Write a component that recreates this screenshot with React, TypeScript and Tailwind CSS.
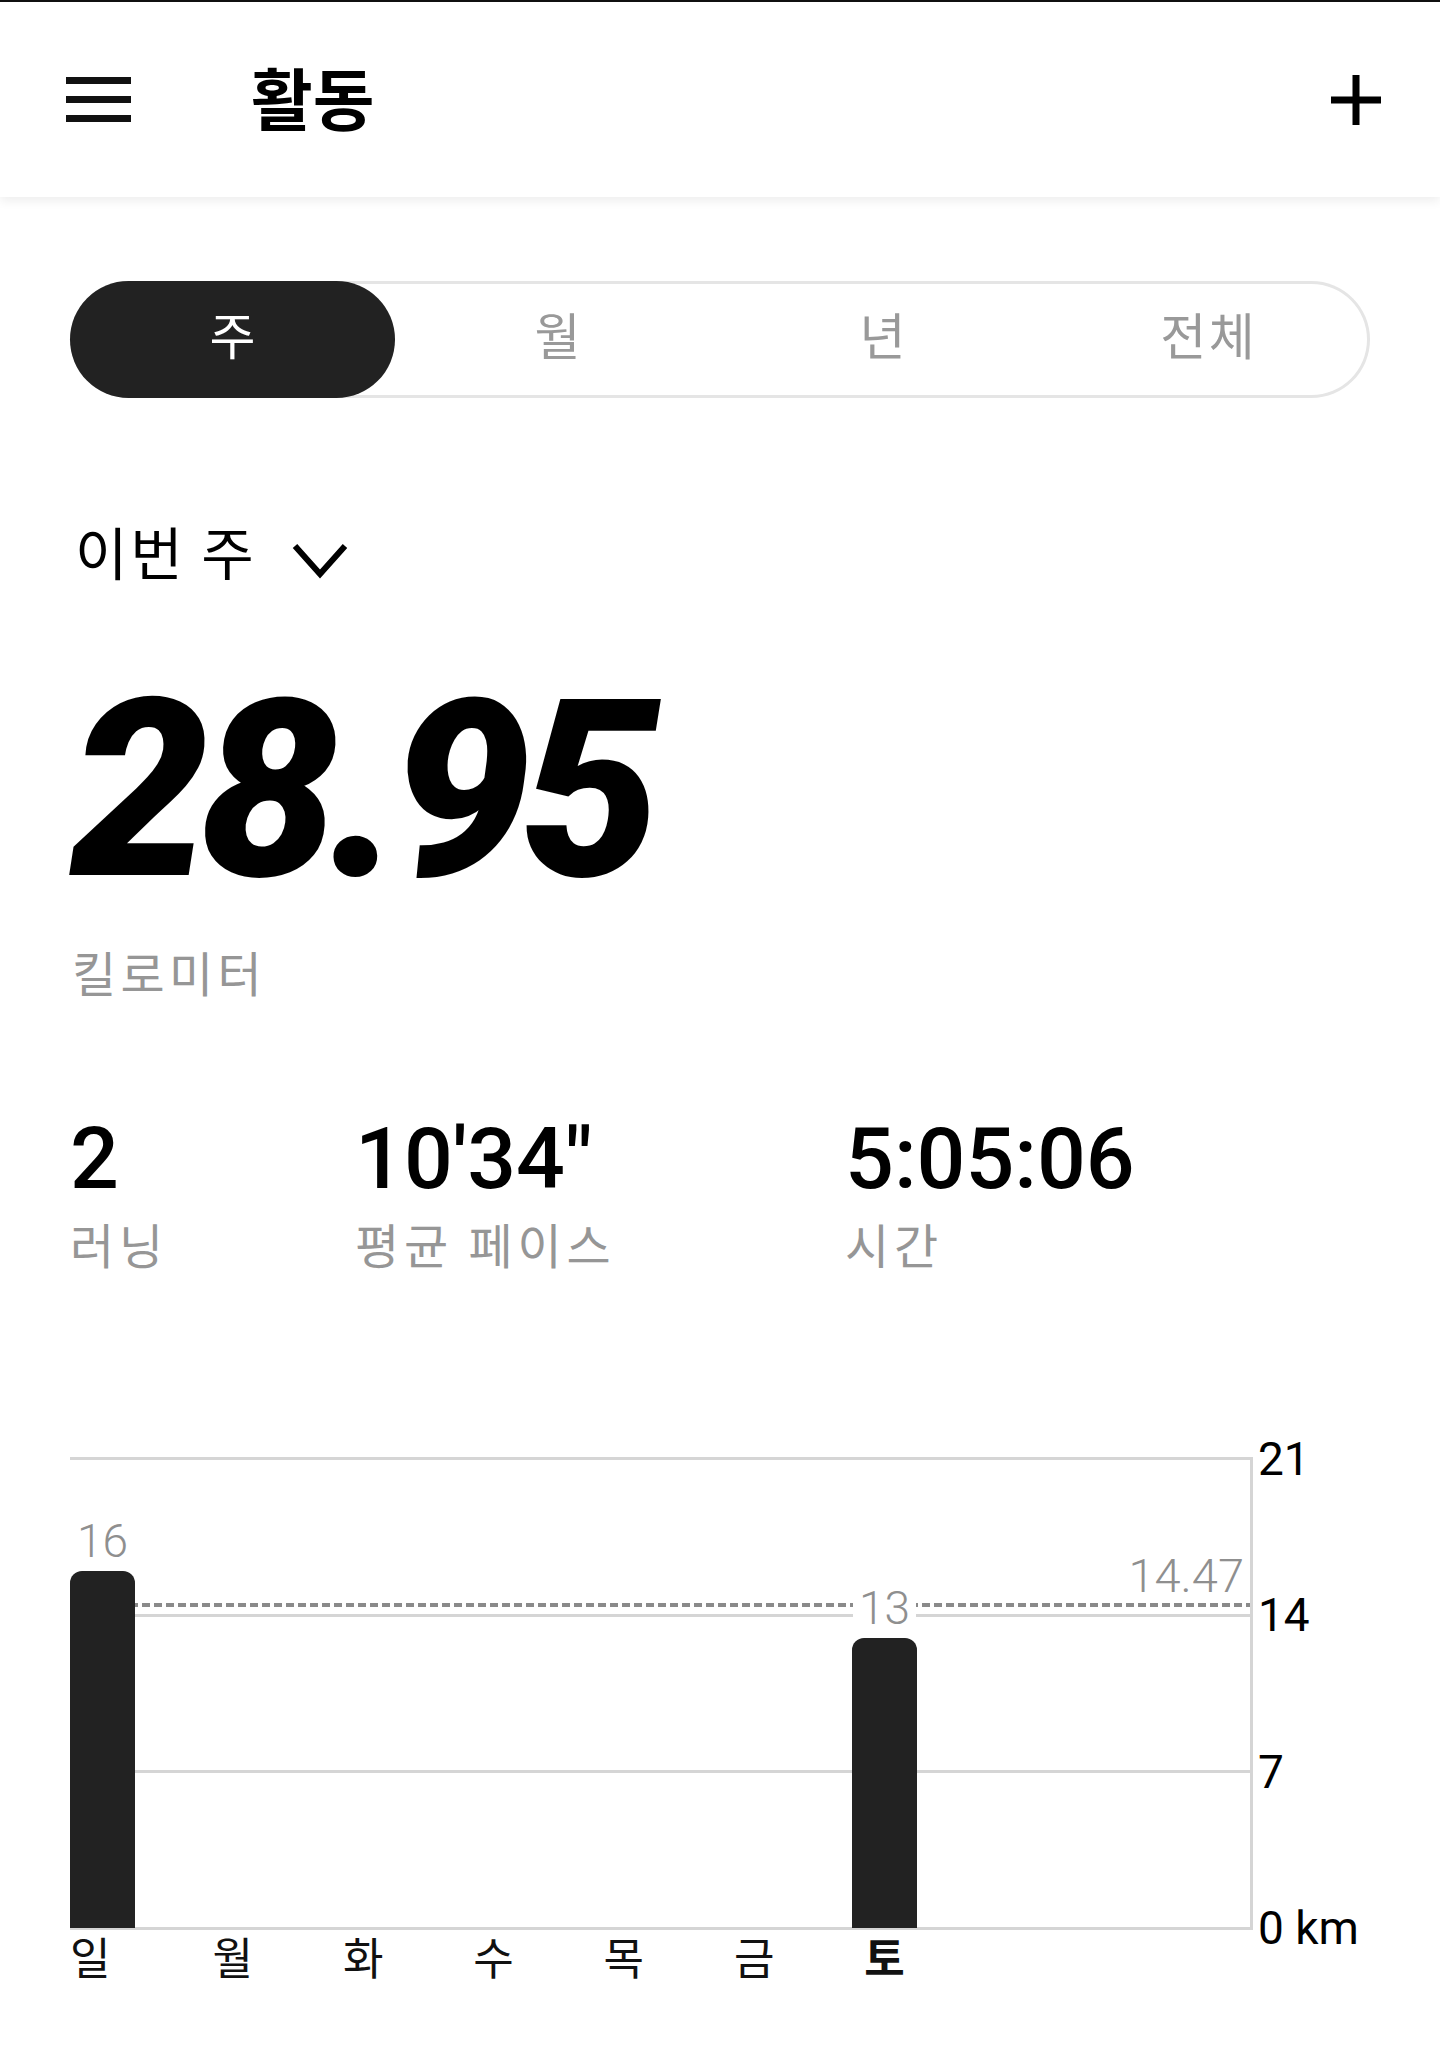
import React from 'react';

const KR = "font-['Noto_Sans_CJK_KR','Noto_Sans',sans-serif]";
const NUM = "font-['Roboto','Noto_Sans_CJK_KR',sans-serif]";

const MAX_KM = 21;
const PLOT_H = 470;

const days = [
  { day: '일', km: 16 },
  { day: '월', km: 0 },
  { day: '화', km: 0 },
  { day: '수', km: 0 },
  { day: '목', km: 0 },
  { day: '금', km: 0 },
  { day: '토', km: 13, today: true },
];

const tabs = ['주', '월', '년', '전체'];

function Header() {
  return (
    <header className="relative z-10 flex h-[195px] items-center bg-white shadow-[0_4px_10px_rgba(0,0,0,0.07)]">
      <div className="ml-[66px] flex w-[65px] flex-col gap-[12px]">
        <span className="h-[7px] bg-[#111]" />
        <span className="h-[7px] bg-[#111]" />
        <span className="h-[7px] bg-[#111]" />
      </div>
      <h1 className={`${KR} mb-[8px] ml-[120px] text-[67px] font-bold leading-none text-black`}>활동</h1>
      <svg className="ml-auto mr-[59px] h-[50px] w-[50px]" viewBox="0 0 50 50">
        <path d="M25 0V50M0 25H50" stroke="#000" strokeWidth="7" fill="none" />
      </svg>
    </header>
  );
}

function Tabs() {
  return (
    <div className="mx-[70px] mt-[84px] grid h-[117px] grid-cols-4 rounded-full shadow-[inset_0_0_0_3px_#e5e5e5]">
      {tabs.map((t, i) => (
        <div
          key={t}
          className={`${KR} flex items-center justify-center rounded-full pb-[14px] text-[50px] leading-none tracking-[0.05em] ${
            i === 0 ? 'bg-[#222] text-white' : 'text-[#999]'
          }`}
        >
          <span className="mr-[-0.05em]">{t}</span>
        </div>
      ))}
    </div>
  );
}

function Stat({ value, label, width }: { value: string; label: string; width: string }) {
  return (
    <div className={`${width} shrink-0`}>
      <div className={`${NUM} text-[86px] font-medium leading-none text-black`}>{value}</div>
      <div className={`${KR} mt-[17px] text-[48px] leading-none tracking-[0.1em] text-[#969696]`}>{label}</div>
    </div>
  );
}

function Chart() {
  const avg = 14.47;
  const avgTop = ((MAX_KM - avg) / MAX_KM) * PLOT_H - 0.5;
  return (
    <div className="ml-[70px] mt-[190px]">
      <div className="flex">
        <div className="relative h-[473px] w-[1183px] border-r-[3px] border-[#d5d5d5]">
          {/* grid lines */}
          <div className="absolute inset-0 flex flex-col justify-between">
            <span className="h-[3px] bg-[#d5d5d5]" />
            <span className="h-[3px] bg-[#d5d5d5]" />
            <span className="h-[3px] bg-[#d5d5d5]" />
            <span className="h-[3px] bg-[#d5d5d5]" />
          </div>
          {/* weekly average */}
          <div
            className="absolute left-0 right-0 h-[4px] bg-[repeating-linear-gradient(90deg,#8a8a8a_0_8px,transparent_8px_12px)]"
            style={{ top: `${avgTop}px` }}
          />
          <span
            className={`${NUM} absolute right-[6px] top-[95px] bg-white text-[47px] font-light leading-none text-[#8f8f8f]`}
          >
            14.47
          </span>
          {/* bars */}
          <div className="relative z-10 flex h-full items-end pb-[2px]">
            {days.map((d) => (
              <div key={d.day} className="flex h-full w-[130.33px] shrink-0 items-end">
                {d.km > 0 && (
                  <div className="flex w-[65px] flex-col items-center">
                    <span
                      className={`${NUM} mb-[7px] bg-white px-[6px] text-[46px] font-light leading-none text-[#8f8f8f]`}
                    >
                      {d.km}
                    </span>
                    <div
                      className="w-[65px] rounded-t-[12px] bg-[#222]"
                      style={{ height: `${(d.km / MAX_KM) * PLOT_H - 1}px` }}
                    />
                  </div>
                )}
              </div>
            ))}
          </div>
        </div>
        {/* y axis */}
        <div className="ml-[5px] flex h-[473px] flex-col justify-between">
          {['21', '14', '7', '0 km'].map((l) => (
            <div key={l} className="flex h-[3px] items-center">
              <span className={`${NUM} whitespace-nowrap text-[46px] leading-none text-black`}>{l}</span>
            </div>
          ))}
        </div>
      </div>
      <div className="mt-[4px] flex">
        {days.map((d, i) => (
          <div key={d.day} className="w-[130.33px] shrink-0">
            <div
              className={`${KR} w-[65px] text-[44px] leading-none text-[#111] ${i === 0 ? 'text-left' : 'text-center'} ${
                d.today ? 'font-bold' : ''
              }`}
            >
              {d.day}
            </div>
          </div>
        ))}
      </div>
    </div>
  );
}

export default function App() {
  return (
    <div className="min-h-[2060px] w-[1440px] border-t-2 border-[#111] bg-white">
      <Header />
      <Tabs />

      <div className="ml-[75px] mt-[124px] flex items-center">
        <span className={`${KR} text-[57px] leading-none tracking-[0.05em] text-black`}>이번 주</span>
        <svg className="ml-[35px] mt-[20px] h-[36px] w-[56px]" viewBox="0 0 56 36">
          <polyline points="3,3 28,31 53,3" stroke="#000" strokeWidth="6" fill="none" />
        </svg>
      </div>

      <div className={`${NUM} ml-[70px] mt-[88px] text-[248px] font-black italic leading-none tracking-[-0.04em] text-black`}>
        28.95
      </div>
      <div className={`${KR} ml-[72px] mt-[32px] text-[48px] leading-none tracking-[0.09em] text-[#969696]`}>킬로미터</div>

      <div className="ml-[70px] mt-[121px] flex">
        <Stat value="2" label="러닝" width="w-[285px]" />
        <Stat value={'10\'34"'} label="평균 페이스" width="w-[490px]" />
        <Stat value="5:05:06" label="시간" width="w-[300px]" />
      </div>

      <Chart />
    </div>
  );
}
